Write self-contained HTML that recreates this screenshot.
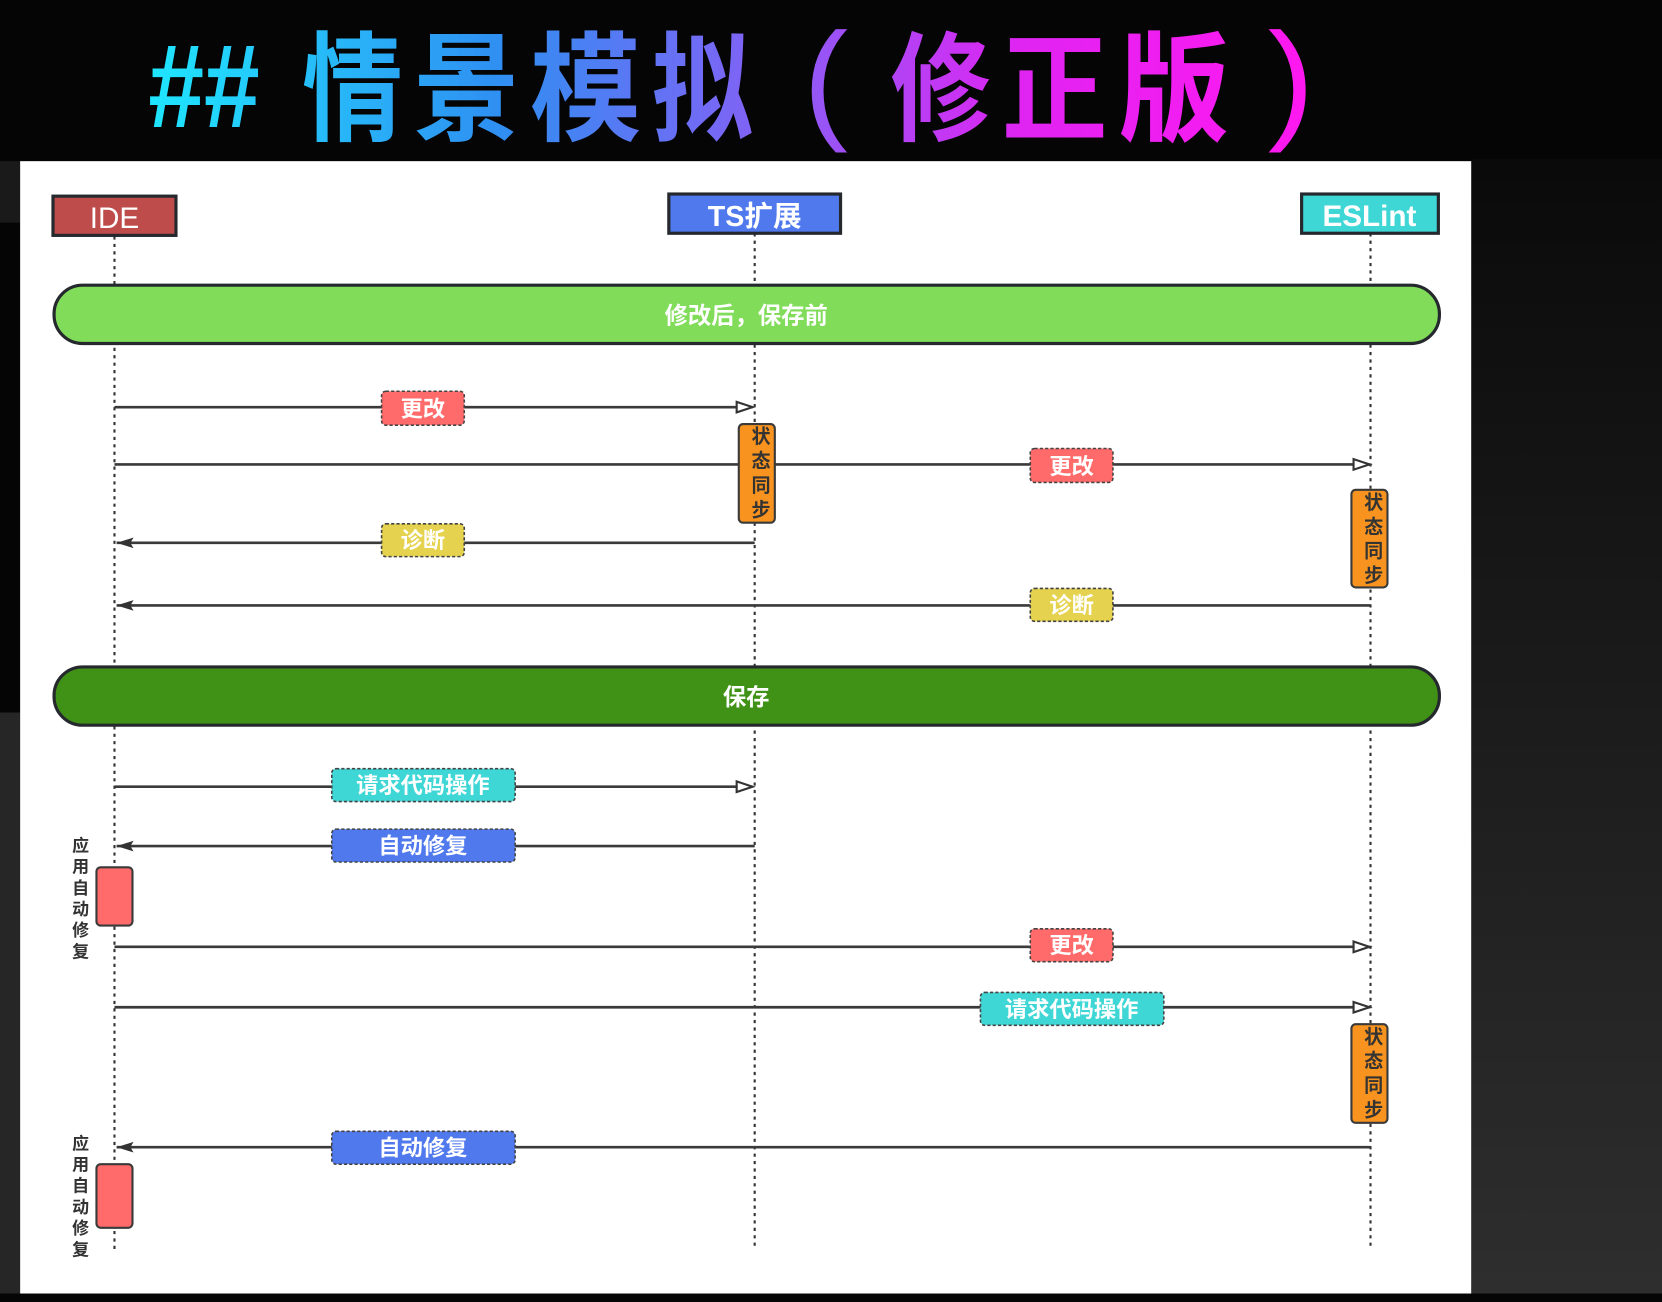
<!DOCTYPE html>
<html><head><meta charset="utf-8"><style>
html,body{margin:0;padding:0;background:#050505;width:1662px;height:1302px;overflow:hidden}
svg{display:block}
text{font-family:"Liberation Sans","Noto Sans CJK SC",sans-serif}
</style></head><body>
<svg width="1662" height="1302" viewBox="0 0 1568 1228" preserveAspectRatio="none" xmlns="http://www.w3.org/2000/svg">
<defs>
<linearGradient id="tg" x1="140" y1="0" x2="1240" y2="0" gradientUnits="userSpaceOnUse">
<stop offset="0" stop-color="#1fe6ff"/>
<stop offset="0.3" stop-color="#2f8ff2"/>
<stop offset="0.55" stop-color="#8c5cf6"/>
<stop offset="0.75" stop-color="#e024f2"/>
<stop offset="1" stop-color="#ff18f0"/>
</linearGradient>
<linearGradient id="rg" x1="0" y1="0" x2="0" y2="1">
<stop offset="0" stop-color="#0a0a0a"/>
<stop offset="1" stop-color="#2e2e2e"/>
</linearGradient>
<marker id="open" markerWidth="20" markerHeight="14" refX="17" refY="7" orient="auto" markerUnits="userSpaceOnUse">
<path d="M2,2 L17,7 L2,12 Z" fill="#fff" stroke="#333" stroke-width="2"/>
</marker>
<marker id="fill" markerWidth="20" markerHeight="14" refX="17" refY="6" orient="auto" markerUnits="userSpaceOnUse">
<path d="M1,1 L17,6 L1,11 L4,6 Z" fill="#333"/>
</marker>
</defs>
<rect x="0" y="0" width="1568" height="1228" fill="#050505"/>
<rect x="1388" y="150" width="180" height="1070" fill="url(#rg)"/>
<rect x="0" y="152" width="19" height="58" fill="#1a1a1a"/>
<rect x="0" y="672" width="19" height="548" fill="#262626"/>
<rect x="0" y="1220" width="1568" height="8" fill="#050505"/>

<g fill="url(#tg)" font-weight="bold" font-size="112">
<text x="140" y="120" textLength="105" lengthAdjust="spacingAndGlyphs">##</text>
<text x="285" y="124" textLength="95" lengthAdjust="spacingAndGlyphs">情</text>
<text x="390" y="124" textLength="100" lengthAdjust="spacingAndGlyphs">景</text>
<text x="500" y="124" textLength="105" lengthAdjust="spacingAndGlyphs">模</text>
<text x="615" y="124" textLength="95" lengthAdjust="spacingAndGlyphs">拟</text>
<text x="840" y="124" textLength="95" lengthAdjust="spacingAndGlyphs">修</text>
<text x="945" y="124" textLength="100" lengthAdjust="spacingAndGlyphs">正</text>
<text x="1055" y="124" textLength="105" lengthAdjust="spacingAndGlyphs">版</text>
</g>
<g fill="url(#tg)" font-size="125" font-weight="normal">
<text x="758" y="118" textLength="42" lengthAdjust="spacingAndGlyphs">(</text>
<text x="1196" y="118" textLength="44" lengthAdjust="spacingAndGlyphs">)</text>
</g>

<rect x="19" y="152" width="1369" height="1068" fill="#fff"/>

<g stroke="#333" stroke-width="2" stroke-dasharray="3,4">
<line x1="108" y1="223" x2="108" y2="1178"/>
<line x1="712" y1="220" x2="712" y2="1178"/>
<line x1="1293" y1="220" x2="1293" y2="1178"/>
</g>

<rect x="50" y="185" width="116" height="37" fill="#bd4c4a" stroke="#25292e" stroke-width="3"/>
<text x="108" y="215" font-size="28" fill="#fff" text-anchor="middle">IDE</text>
<rect x="631" y="183" width="162" height="37" fill="#5079ee" stroke="#25292e" stroke-width="3"/>
<text x="712" y="213" font-size="27" font-weight="bold" fill="#fff" text-anchor="middle">TS扩展</text>
<rect x="1228" y="183" width="129" height="37" fill="#3fd6d6" stroke="#25292e" stroke-width="3"/>
<text x="1292" y="213" font-size="28" font-weight="bold" fill="#fff" text-anchor="middle">ESLint</text>

<rect x="51" y="269" width="1307" height="55" rx="27" fill="#80dc59" stroke="#25292e" stroke-width="3"/>
<text x="704" y="305" font-size="22" font-weight="bold" fill="#fff" text-anchor="middle">修改后，保存前</text>
<rect x="51" y="629" width="1307" height="55" rx="27" fill="#409216" stroke="#25292e" stroke-width="3"/>
<text x="704" y="665" font-size="22" font-weight="bold" fill="#fff" text-anchor="middle">保存</text>

<g stroke="#3a3a3a" stroke-width="2.5" fill="none">
<line x1="108" y1="384" x2="710" y2="384" marker-end="url(#open)"/>
<line x1="108" y1="438" x2="1292" y2="438" marker-end="url(#open)"/>
<line x1="712" y1="512" x2="110" y2="512" marker-end="url(#fill)"/>
<line x1="1293" y1="571" x2="110" y2="571" marker-end="url(#fill)"/>
<line x1="108" y1="742" x2="710" y2="742" marker-end="url(#open)"/>
<line x1="712" y1="798" x2="110" y2="798" marker-end="url(#fill)"/>
<line x1="108" y1="893" x2="1292" y2="893" marker-end="url(#open)"/>
<line x1="108" y1="950" x2="1292" y2="950" marker-end="url(#open)"/>
<line x1="1293" y1="1082" x2="110" y2="1082" marker-end="url(#fill)"/>
</g>

<g stroke="#3a3a3a" stroke-width="2">
<rect x="697" y="400" width="34" height="93" rx="4" fill="#f7931e"/>
<rect x="1275" y="462" width="34" height="92" rx="4" fill="#f7931e"/>
<rect x="1275" y="966" width="34" height="93" rx="4" fill="#f7931e"/>
<rect x="91" y="818" width="34" height="55" rx="4" fill="#ff6b6b"/>
<rect x="91" y="1098" width="34" height="60" rx="4" fill="#ff6b6b"/>
</g>
<g font-size="18" font-weight="bold" fill="#333" text-anchor="middle">
<text x="718" y="418">状</text><text x="718" y="441">态</text><text x="718" y="464">同</text><text x="718" y="487">步</text>
<text x="1296" y="480">状</text><text x="1296" y="503">态</text><text x="1296" y="526">同</text><text x="1296" y="549">步</text>
<text x="1296" y="984">状</text><text x="1296" y="1007">态</text><text x="1296" y="1030">同</text><text x="1296" y="1053">步</text>
</g>
<g font-size="16" font-weight="bold" fill="#333" text-anchor="middle">
<text x="76" y="803">应</text><text x="76" y="823">用</text><text x="76" y="843">自</text><text x="76" y="863">动</text><text x="76" y="883">修</text><text x="76" y="903">复</text>
<text x="76" y="1084">应</text><text x="76" y="1104">用</text><text x="76" y="1124">自</text><text x="76" y="1144">动</text><text x="76" y="1164">修</text><text x="76" y="1184">复</text>
</g>

<g stroke="#444" stroke-width="1.5" stroke-dasharray="3,2">
<rect x="360" y="369" width="78" height="32" rx="4" fill="#ff6b6b"/>
<rect x="972" y="423" width="78" height="32" rx="4" fill="#ff6b6b"/>
<rect x="360" y="494" width="78" height="31" rx="4" fill="#e5d24e"/>
<rect x="972" y="555" width="78" height="31" rx="4" fill="#e5d24e"/>
<rect x="313" y="725" width="173" height="31" rx="4" fill="#3fd6d6"/>
<rect x="313" y="782" width="173" height="31" rx="4" fill="#5079ee"/>
<rect x="972" y="876" width="78" height="31" rx="4" fill="#ff6b6b"/>
<rect x="925" y="936" width="173" height="31" rx="4" fill="#3fd6d6"/>
<rect x="313" y="1067" width="173" height="31" rx="4" fill="#5079ee"/>
</g>
<g font-size="21" font-weight="bold" fill="#fff" text-anchor="middle">
<text x="399" y="393">更改</text>
<text x="1011" y="447">更改</text>
<text x="399" y="517">诊断</text>
<text x="1011" y="578">诊断</text>
<text x="399" y="748">请求代码操作</text>
<text x="399" y="805">自动修复</text>
<text x="1011" y="899">更改</text>
<text x="1011" y="959">请求代码操作</text>
<text x="399" y="1090">自动修复</text>
</g>
</svg>
</body></html>
